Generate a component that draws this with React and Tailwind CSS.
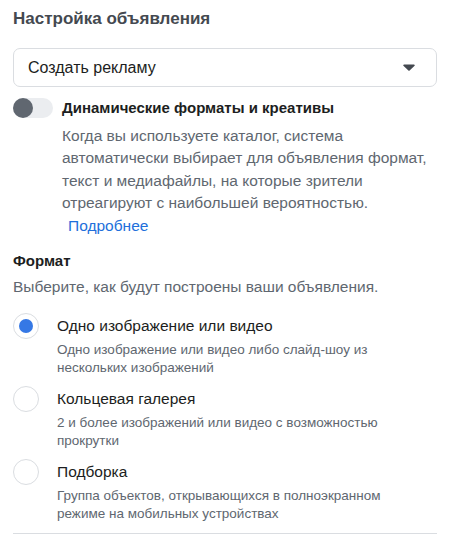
import { useState } from 'react';

const options = [
    {
        id: 'single',
        title: 'Одно изображение или видео',
        desc: 'Одно изображение или видео либо слайд-шоу из нескольких изображений',
    },
    {
        id: 'carousel',
        title: 'Кольцевая галерея',
        desc: '2 и более изображений или видео с возможностью прокрутки',
    },
    {
        id: 'collection',
        title: 'Подборка',
        desc: 'Группа объектов, открывающихся в полноэкранном режиме на мобильных устройствах',
    },
];

const App = () => {
    const [format, setFormat] = useState('single');
    const [dynamic, setDynamic] = useState(false);

    return (
        <div className="w-[450px] h-[535px] overflow-hidden bg-white px-[13px] pt-[8px] font-['Liberation_Sans',Arial,sans-serif] text-[#1c1e21]">
            <h1 className="text-[17px] leading-[22px] font-bold text-[#444950]">Настройка объявления</h1>

            {/* Select */}
            <button className="mt-[18px] w-full h-[39px] rounded-[7px] border border-[#dadde1] flex items-center justify-between pl-[14px] pr-[21px]">
                <span className="text-[16px] text-[#1c1e21]">Создать рекламу</span>
                <svg width="12" height="7" viewBox="0 0 12 7">
                    <path d="M1 0.5h10a0.8 0.8 0 0 1 0.6 1.3L6.6 6.4a0.8 0.8 0 0 1-1.2 0L0.4 1.8A0.8 0.8 0 0 1 1 0.5z" fill="#444950" />
                </svg>
            </button>

            {/* Dynamic toggle */}
            <div className="mt-[10px] flex gap-[9px]">
                <button
                    onClick={() => setDynamic(!dynamic)}
                    className="mt-[1px] w-[40px] h-[20px] rounded-full bg-[#ebedf0] flex items-center flex-shrink-0"
                >
                    <span className={`w-[20px] h-[20px] rounded-full ${dynamic ? 'bg-[#1877f2] translate-x-[20px]' : 'bg-[#606770]'}`} />
                </button>
                <div>
                    <div className="text-[15px] leading-[22px] font-bold text-[#1c1e21]">Динамические форматы и креативы</div>
                    <p className="mt-[6px] text-[15.5px] leading-[22.4px] text-[#606770]">
                        Когда вы используете каталог, система автоматически выбирает для объявления формат, текст и медиафайлы, на которые зрители отреагируют с наибольшей вероятностью.
                        <br />
                        <a href="#" className="ml-[6px] text-[#216fdb]">Подробнее</a>
                    </p>
                </div>
            </div>

            {/* Format */}
            <h2 className="mt-[14px] text-[15px] leading-[20px] font-bold text-[#1c1e21]">Формат</h2>
            <p className="mt-[6px] text-[15.5px] leading-[20px] text-[#606770]">Выберите, как будут построены ваши объявления.</p>

            <div className="mt-[16px] flex flex-col gap-[9px]">
                {options.map((opt) => (
                    <label key={opt.id} className="flex gap-[18px] cursor-pointer" onClick={() => setFormat(opt.id)}>
                        <span className="w-[26px] h-[26px] rounded-full border border-[#dadde1] flex items-center justify-center flex-shrink-0">
                            {format === opt.id && <span className="w-[14px] h-[14px] rounded-full bg-[#3578e5]" />}
                        </span>
                        <div className="pt-[3px]">
                            <div className="text-[15.5px] leading-[20px] text-[#1c1e21]">{opt.title}</div>
                            <div className="mt-[5px] text-[13.5px] leading-[18px] text-[#606770] pr-[40px]">{opt.desc}</div>
                        </div>
                    </label>
                ))}
            </div>

            <div className="mt-[10px] border-t border-[#dadde1]" />
        </div>
    );
};

export default App;
